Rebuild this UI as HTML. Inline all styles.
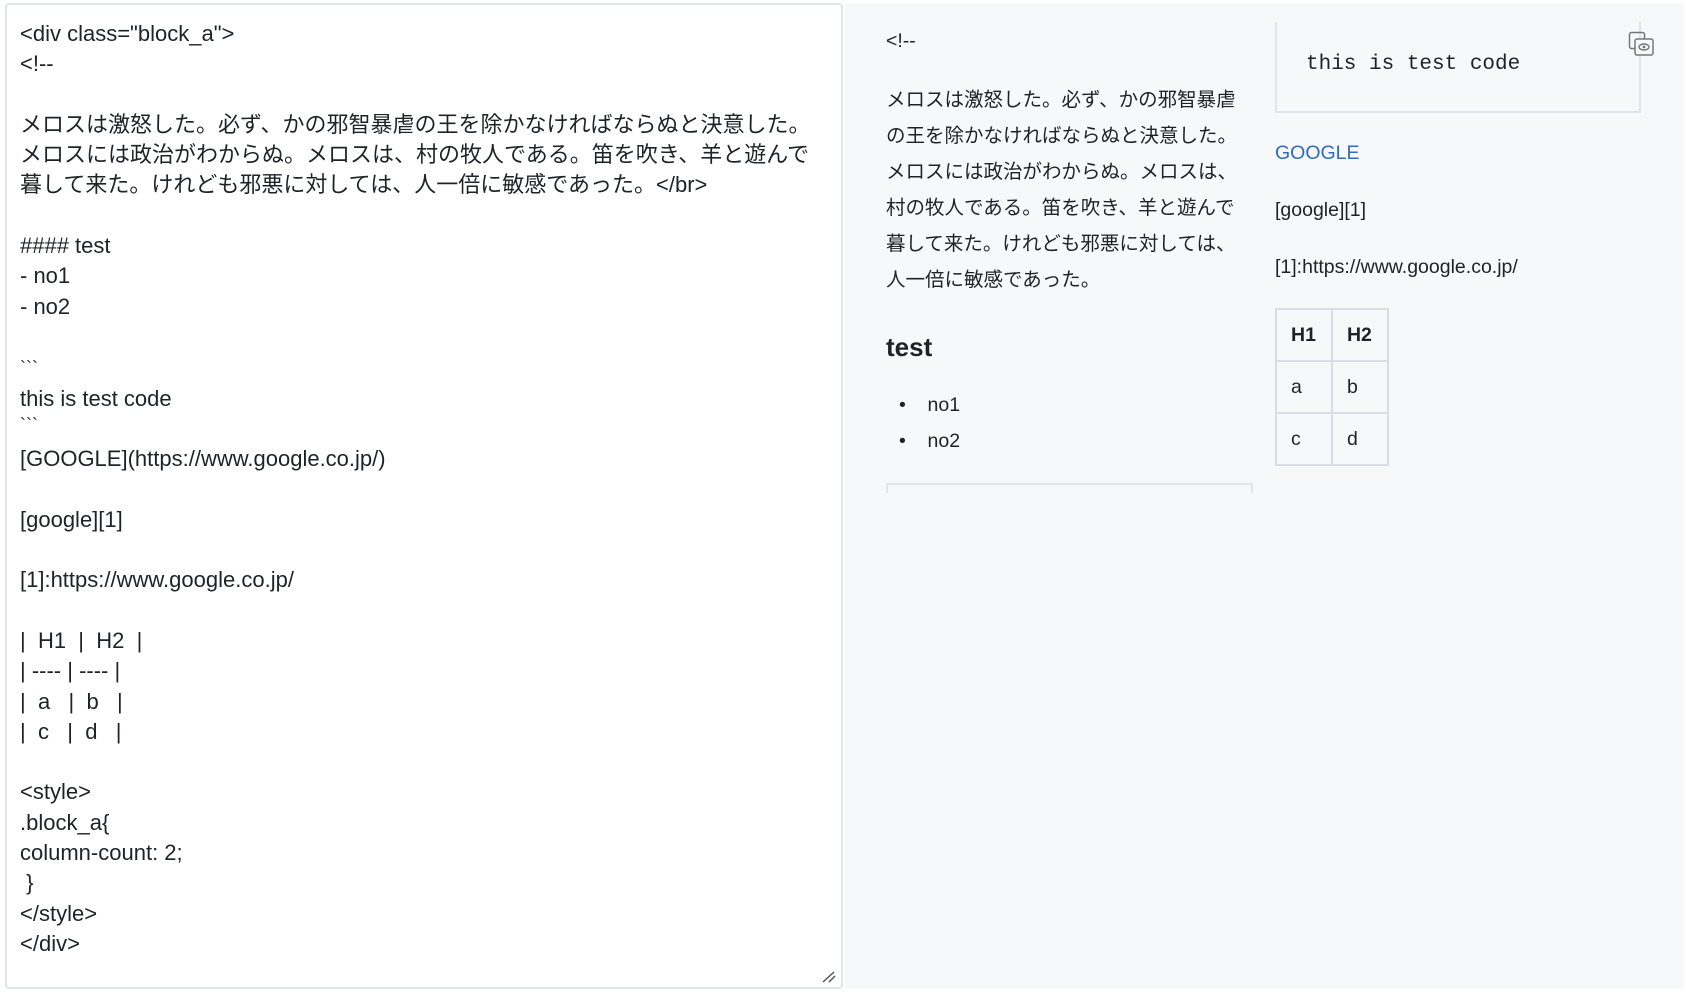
<!DOCTYPE html>
<html><head><meta charset="utf-8"><style>
body{margin:0;width:1686px;height:998px;background:#fff;position:relative;overflow:hidden;font-family:"Liberation Sans","Noto Sans CJK JP",sans-serif;color:#1f2328}
#ed{position:absolute;left:5px;top:3px;width:838px;height:986px;border:2px solid #e1e4e8;border-radius:4px;background:#fff;box-sizing:border-box}
#src{position:absolute;left:13px;top:14px;margin:0;font-family:"Liberation Sans","Noto Sans CJK JP",sans-serif;font-size:22px;line-height:30.3px;white-space:pre;color:#1f2328}
#pv{position:absolute;left:845px;top:3px;width:839px;height:986px;background:#f6f8fa}
.t{position:absolute;font-size:19.5px;white-space:nowrap}
.jp{position:absolute;left:886px;top:82px;width:380px;font-size:19.5px;line-height:36px;white-space:nowrap}
table{position:absolute;left:1275px;top:308px;border-collapse:collapse;font-size:19.5px;background:#f6f8fa}
td,th{border:2px solid #d8dee4;height:50px;padding:0 15px 0 14px;text-align:left}
</style></head><body>
<div id="ed"><pre id="src">&lt;div class="block_a"&gt;
&lt;!--

メロスは激怒した。必ず、かの邪智暴虐の王を除かなければならぬと決意した。
メロスには政治がわからぬ。メロスは、村の牧人である。笛を吹き、羊と遊んで
暮して来た。けれども邪悪に対しては、人一倍に敏感であった。&lt;/br&gt;

#### test
- no1
- no2

<span style="font-size:18px">&#96;&#96;&#96;</span>
this is test code
<span style="font-size:18px;line-height:22px;vertical-align:top">&#96;&#96;&#96;</span>
[GOOGLE](https://www.google.co.jp/)

[google][1]

[1]:https://www.google.co.jp/

|  H1  |  H2  |
| ---- | ---- |
|  a   |  b   |
|  c   |  d   |

&lt;style&gt;
.block_a{
column-count: 2;
 }
&lt;/style&gt;
&lt;/div&gt;</pre>
<svg style="position:absolute;right:4px;bottom:4px" width="16" height="14"><path d="M2 13L13 3M8 13L14 7" stroke="#555" stroke-width="1.5"/></svg>
</div>
<div id="pv"></div>
<div class="t" style="left:886px;top:30px">&lt;!--</div>
<div class="jp">メロスは激怒した。必ず、かの邪智暴虐<br>の王を除かなければならぬと決意した。<br>メロスには政治がわからぬ。メロスは、<br>村の牧人である。笛を吹き、羊と遊んで<br>暮して来た。けれども邪悪に対しては、<br>人一倍に敏感であった。</div>
<div class="t" style="left:886px;top:332px;font-size:26px;font-weight:bold">test</div>
<div class="t" style="left:899px;top:394px">•&nbsp;&nbsp;&nbsp;&nbsp;no1</div>
<div class="t" style="left:899px;top:430px">•&nbsp;&nbsp;&nbsp;&nbsp;no2</div>
<div style="position:absolute;left:886px;top:483px;width:367px;height:10px;border:2px solid #e1e4e8;border-bottom:none;box-sizing:border-box"></div>
<div style="position:absolute;left:1275px;top:22px;width:366px;height:91px;border:2px solid #e1e4e8;border-top:none;box-sizing:border-box"></div>
<div class="t" style="left:1306px;top:53px;font-family:'Liberation Mono',monospace;font-size:21px">this is test code</div>
<svg style="position:absolute;left:1628px;top:31px" width="28" height="26" viewBox="0 0 28 26"><rect x="1.5" y="1.5" width="15" height="16" rx="2" fill="none" stroke="#777" stroke-width="1.5"/><rect x="7" y="8" width="18" height="16" rx="2" fill="#f6f8fa" stroke="#777" stroke-width="1.5"/><ellipse cx="16" cy="16" rx="5" ry="3" fill="none" stroke="#777" stroke-width="1.4"/><circle cx="16" cy="16" r="1.4" fill="#777"/></svg>
<div class="t" style="left:1275px;top:142px;color:#2f6cbf">GOOGLE</div>
<div class="t" style="left:1275px;top:199px">[google][1]</div>
<div class="t" style="left:1275px;top:256px">[1]:https://www.google.co.jp/</div>
<table><tr><th>H1</th><th>H2</th></tr><tr><td>a</td><td>b</td></tr><tr><td>c</td><td>d</td></tr></table>
</body></html>
